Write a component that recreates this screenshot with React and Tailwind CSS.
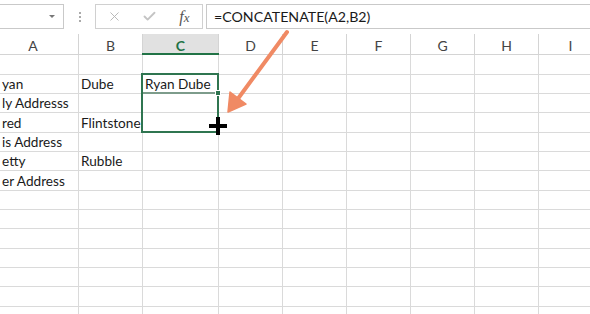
import { X, Check } from 'lucide-react';

const columns = [
    { key: 'A', width: 'w-[79px]', label: 'pr-3' },
    { key: 'B', width: 'w-[64px]', label: '' },
    { key: 'C', width: 'w-[76px]', label: '' },
    { key: 'D', width: 'w-[64px]', label: '' },
    { key: 'E', width: 'w-[64px]', label: '' },
    { key: 'F', width: 'w-[64px]', label: '' },
    { key: 'G', width: 'w-[64px]', label: '' },
    { key: 'H', width: 'w-[64px]', label: '' },
    { key: 'I', width: 'w-[64px]', label: '' },
];

const heights = ['h-[20px]', 'h-[19px]', 'h-[19px]'];

const data = [
    { A: '', B: '', C: '' },
    { A: 'yan', B: 'Dube', C: 'Ryan Dube' },
    { A: 'ly Addresss', B: '', C: '' },
    { A: 'red', B: 'Flintstone', C: '' },
    { A: 'is Address', B: '', C: '' },
    { A: 'etty', B: 'Rubble', C: '' },
    { A: 'er Address', B: '', C: '' },
];

function Cell({ col, value }) {
    return (
        <div className={`${col.width} shrink-0 h-full border-r border-[#dadada] overflow-visible whitespace-nowrap pl-[2px] flex items-end pb-[1px] leading-[16px] text-[#1a1a1a]`}>
            {value}
        </div>
    );
}

export default function App() {
    const rows = Array.from({ length: 14 }, (_, i) => data[i] || {});

    return (
        <div className="w-[590px] h-[314px] overflow-hidden bg-white relative font-['Lato',sans-serif] text-[13.6px]">
            {/* formula bar */}
            <div className="h-[34px] flex items-start pt-[4px]">
                <div className="w-[64px] h-[25px] border border-l-0 border-[#c9c9c9] flex items-center justify-end pr-[8px]">
                    <span className="w-0 h-0 border-l-[3px] border-r-[3px] border-t-[3px] border-l-transparent border-r-transparent border-t-[#777]" />
                </div>
                <div className="w-[31px] h-[25px] flex flex-col items-center justify-center gap-[2px]">
                    <span className="w-[2px] h-[2px] bg-[#aaa]" />
                    <span className="w-[2px] h-[2px] bg-[#aaa]" />
                    <span className="w-[2px] h-[2px] bg-[#aaa]" />
                </div>
                <div className="w-[108px] h-[25px] border border-[#d0d0d0] flex items-center">
                    <div className="w-[36px] flex justify-center pl-[2px]">
                        <X className="w-[15px] h-[15px] text-[#b5b5b5]" strokeWidth={1.5} />
                    </div>
                    <div className="w-[36px] flex justify-center">
                        <Check className="w-[15px] h-[15px] text-[#c4c4c4]" strokeWidth={3} />
                    </div>
                    <div className="w-[36px] flex justify-center">
                        <span className="font-['Liberation_Serif',serif] italic text-[16px] text-[#555] leading-none">
                            f<span className="text-[13px]">x</span>
                        </span>
                    </div>
                </div>
                <div className="ml-[3px] flex-1 h-[25px] border border-r-0 border-[#c9c9c9] flex items-center pl-[7px] text-[14.2px] text-[#1a1a1a]">
                    =CONCATENATE(A2,B2)
                </div>
            </div>

            {/* column headers */}
            <div className="h-[21px] flex border-b border-[#d4d4d4] text-[#444] text-[14px]">
                {columns.map((col) =>
                    col.key === 'C' ? (
                        <div
                            key={col.key}
                            className={`${col.width} shrink-0 h-full border-r border-[#d4d4d4] bg-[#e1e1e1] flex items-center justify-center pt-[3px] text-[#217346] font-bold`}
                        >
                            C
                        </div>
                    ) : (
                        <div
                            key={col.key}
                            className={`${col.width} ${col.label} shrink-0 h-full border-r border-[#d4d4d4] flex items-center justify-center pt-[3px]`}
                        >
                            {col.key}
                        </div>
                    )
                )}
            </div>

            {/* grid */}
            {rows.map((row, i) => (
                <div key={i} className={`${heights[i % 3]} flex border-b border-[#dadada]`}>
                    {columns.map((col) => (
                        <Cell key={col.key} col={col} value={row[col.key]} />
                    ))}
                </div>
            ))}

            {/* green under C header */}
            <div className="absolute left-[142px] top-[53px] w-[77px] h-[2px] bg-[#217346]" />

            {/* selection */}
            <div className="absolute left-[141px] top-[73px] w-[78px] h-[60px] border-2 border-[#2f7550]" />
            <div className="absolute left-[143px] top-[92px] w-[74px] h-[2px] bg-[#7d9c8b]" />
            <div className="absolute left-[215px] top-[90px] w-[6px] h-[6px] bg-[#2f7550] border border-white" />

            {/* fill cursor */}
            <div className="absolute left-[209px] top-[124px] w-[18px] h-[4px] bg-black" />
            <div className="absolute left-[216px] top-[117px] w-[4px] h-[18px] bg-black" />

            {/* arrow */}
            <svg className="absolute left-0 top-0" width="590" height="314" viewBox="0 0 590 314">
                <line x1="287" y1="32" x2="237" y2="100" stroke="#f08a64" strokeWidth="4" strokeLinecap="round" />
                <polygon points="228,112 230,92 246,104" fill="#f08a64" strokeLinejoin="round" stroke="#f08a64" strokeWidth="1.5" />
            </svg>
        </div>
    );
}
